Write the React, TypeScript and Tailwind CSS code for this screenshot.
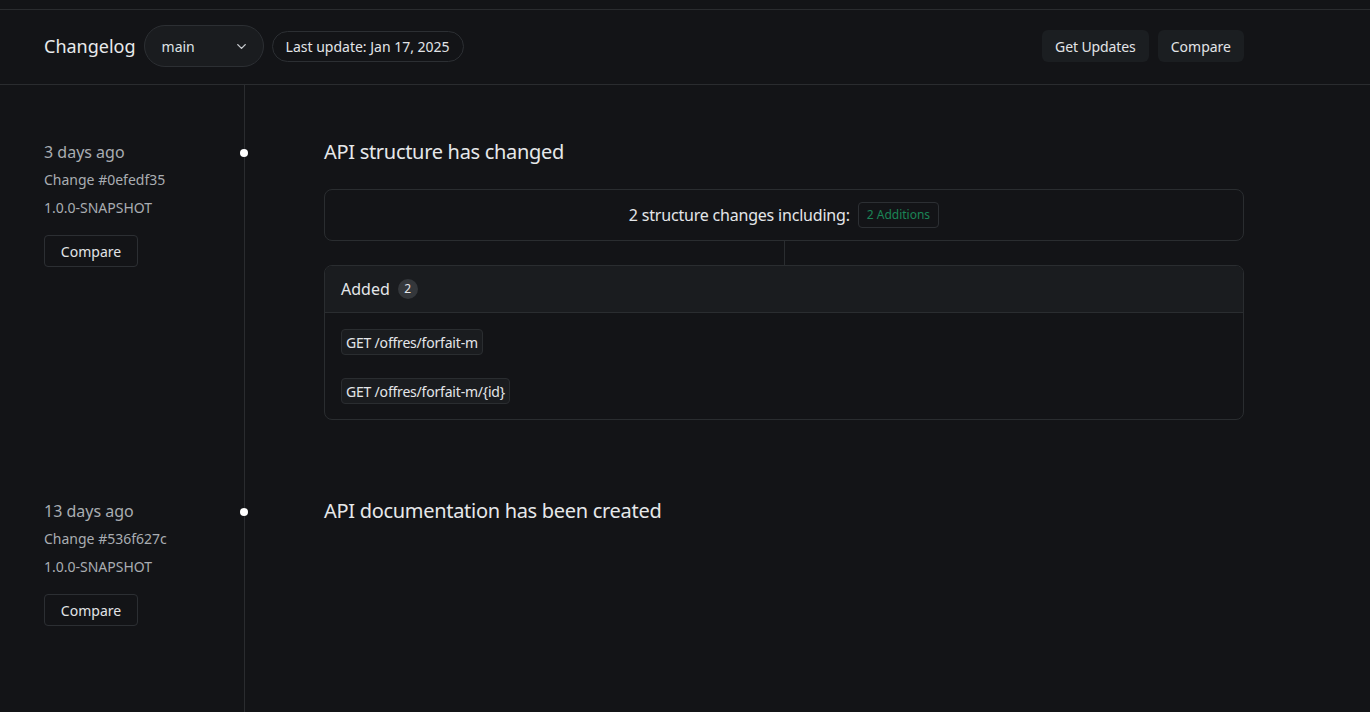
import { ChevronDown } from "lucide-react";

type Entry = {
  when: string;
  change: string;
  version: string;
  title: string;
  added?: string[];
};

const ENTRIES: Entry[] = [
  {
    when: "3 days ago",
    change: "Change #0efedf35",
    version: "1.0.0-SNAPSHOT",
    title: "API structure has changed",
    added: ["GET /offres/forfait-m", "GET /offres/forfait-m/{id}"],
  },
  {
    when: "13 days ago",
    change: "Change #536f627c",
    version: "1.0.0-SNAPSHOT",
    title: "API documentation has been created",
  },
];

function Header() {
  return (
    <header className="shrink-0 border-t border-b border-[#2a2c2f] mt-[9px] h-[76px] px-[44px]">
      <div className="w-[1200px] h-full flex items-center pb-[2px]">
        <h1 className="text-[18px] text-[#e8eaec] leading-none mr-[8px]">Changelog</h1>
        <button className="flex items-center justify-between w-[120px] h-[42px] pl-[17px] pr-[14px] rounded-full border border-[#2c2f33] bg-[#1a1c1f] text-[14px] text-[#dfe2e5]">
          <span>main</span>
          <ChevronDown className="w-[15px] h-[15px] text-[#c9ccd0]" strokeWidth={2.2} />
        </button>
        <span className="ml-[8px] h-[31px] px-[13px] flex items-center rounded-full border border-[#2c2f33] text-[14px] text-[#e2e4e7]">
          Last update: Jan 17, 2025
        </span>
        <div className="ml-auto flex gap-[9px]">
          <button className="h-[32px] px-[13px] rounded-md bg-[#1b1e21] text-[14px] text-[#e2e4e7] tracking-[-0.1px]">Get Updates</button>
          <button className="h-[32px] px-[13px] rounded-md bg-[#1b1e21] text-[14px] text-[#e2e4e7]">Compare</button>
        </div>
      </div>
    </header>
  );
}

function AddedBlock({ items }: { items: string[] }) {
  return (
    <div>
      <div className="h-[52px] rounded-lg border border-[#2a2d30] flex items-center justify-center gap-[8px]">
        <span className="text-[16px] text-[#e4e6e9] tracking-[-0.2px]">2 structure changes including:</span>
        <span className="h-[26px] px-[8px] flex items-center rounded border border-[#2c2f33] text-[12px] text-[#1b8456]">
          {items.length} Additions
        </span>
      </div>
      <div className="flex justify-center">
        <div className="w-px h-[24px] bg-[#2a2d30]" />
      </div>
      <div className="rounded-lg border border-[#2a2d30] overflow-hidden">
        <div className="h-[47px] bg-[#1a1c1f] border-b border-[#2a2d30] px-[16px] flex items-center gap-[8px]">
          <span className="text-[16px] text-[#e4e6e9]">Added</span>
          <span className="w-[20px] h-[20px] rounded-full bg-[#34373b] flex items-center justify-center text-[12px] text-[#e4e6e9]">
            {items.length}
          </span>
        </div>
        <div className="px-[16px] pt-[16px] pb-[15px] flex flex-col gap-[23px] items-start">
          {items.map((it) => (
            <code
              key={it}
              className="h-[26px] px-[4px] flex items-center rounded border border-[#2a2d30] bg-[#1a1c1f] text-[14px] text-[#e4e6e9] tracking-[-0.2px] font-['Noto_Sans',sans-serif]"
            >
              {it}
            </code>
          ))}
        </div>
      </div>
    </div>
  );
}

function EntryRow({ entry, last }: { entry: Entry; last: boolean }) {
  return (
    <div className={`flex ${last ? "flex-1" : ""}`}>
      <div className="w-[201px] shrink-0 border-r border-[#2a2c2f] relative pt-[55px]">
        <span className="absolute right-[-4px] top-[64px] w-[8px] h-[8px] rounded-full bg-white" />
        <div className="text-[16px] leading-[24px] text-[#a9adb2]">{entry.when}</div>
        <div className="mt-[6px] text-[14px] leading-[20px] text-[#a9adb2]">{entry.change}</div>
        <div className="mt-[8px] text-[14px] leading-[20px] text-[#a9adb2]">{entry.version}</div>
        <button className="mt-[17px] h-[32px] w-[94px] rounded border border-[#2c2f33] text-[14px] text-[#e2e4e7]">Compare</button>
      </div>
      <div className="flex-1 pl-[79px] pt-[54px] pb-[24px]">
        <h2 className="text-[20px] leading-[26px] text-[#e6e8ea] mb-[24px] tracking-[-0.3px]">{entry.title}</h2>
        {entry.added && <AddedBlock items={entry.added} />}
      </div>
    </div>
  );
}

export default function App() {
  return (
    <div className="h-[712px] bg-[#131417] font-['Noto_Sans',sans-serif] overflow-hidden flex flex-col">
      <Header />
      <main className="flex-1 px-[44px] flex">
        <div className="w-[1200px] flex flex-col">
          {ENTRIES.map((e, i) => (
            <EntryRow key={e.change} entry={e} last={i === ENTRIES.length - 1} />
          ))}
        </div>
      </main>
    </div>
  );
}
